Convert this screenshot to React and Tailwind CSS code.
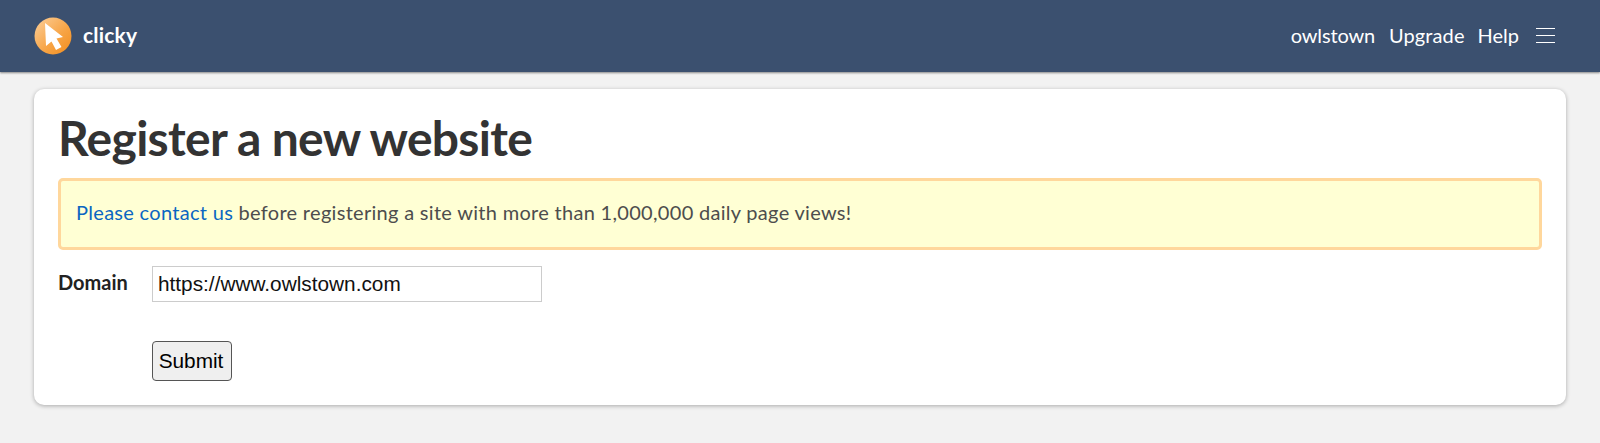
const textFont = "font-['Lato','Open_Sans',sans-serif]";

function Logo() {
  return (
    <svg width="38" height="38" viewBox="0 0 38 38">
      <defs>
        <linearGradient id="logoFill" x1="0.1" y1="0.1" x2="0.9" y2="0.9">
          <stop offset="0" stopColor="#fbc88c" />
          <stop offset="0.6" stopColor="#f7a445" />
          <stop offset="1" stopColor="#f39226" />
        </linearGradient>
      </defs>
      <circle cx="19" cy="19" r="18.5" fill="url(#logoFill)" />
      <path d="M11 6 L29 20 L22.5 21.5 L27.5 30 L22 33 L17.5 24.5 L12 29 Z" fill="#fff" />
    </svg>
  );
}

export default function App() {
  return (
    <div className={`h-[443px] bg-[#f2f2f2] overflow-hidden ${textFont}`}>
      {/* Header */}
      <header className="h-[72px] bg-[#3b506f] shadow-[0_1px_2px_rgba(0,0,0,0.45)] pl-[34px] pr-[45px] flex items-center justify-between">
        <div className="flex items-center gap-[11px]">
          <Logo />
          <span className="text-white font-bold text-[21px] tracking-[0.2px] -mt-[3px]">clicky</span>
        </div>
        <nav className="flex items-center text-white text-[20px] -mt-[2px]">
          <span className="tracking-[-0.15px]">owlstown</span>
          <span className="ml-[14px] tracking-[0.1px]">Upgrade</span>
          <span className="ml-[13px]">Help</span>
          <div className="ml-[17px] w-[19px] flex flex-col gap-[6px]">
            <div className="h-px bg-white" />
            <div className="h-px bg-white" />
            <div className="h-px bg-white" />
          </div>
        </nav>
      </header>

      {/* Card */}
      <main className="mt-[17px] mx-[34px] h-[316px] bg-white rounded-[10px] shadow-[0_1px_4px_rgba(0,0,0,0.3)] px-6 pt-[18px]">
        <h1 className="text-[#333] font-bold text-[48px] tracking-[-0.7px] leading-[60px] pt-px -mb-px">Register a new website</h1>
        <div className="mt-[11px] h-[72px] bg-[#ffffd4] border-[3px] border-[#ffd79c] rounded-[5px] px-[15px] flex items-center text-[#4d4d4d] text-[20px] tracking-[0.3px]">
          <p className="-mt-[4px]">
            <a className="text-[#0a66c2]">Please contact us</a> before registering a site with more than 1,000,000 daily page views!
          </p>
        </div>
        <form className="mt-4">
          <div className="flex items-start">
            <label className="w-[94px] pt-px text-[#222] font-bold text-[20px]">Domain</label>
            <input
              readOnly
              value="https://www.owlstown.com"
              className="w-[390px] h-[36px] border border-[#ccc] px-[5px] text-[20.8px] text-[#111] font-['Liberation_Sans',sans-serif] outline-none"
            />
          </div>
          <button
            type="button"
            className="mt-[39px] ml-[94px] w-[80px] h-[40px] bg-[#efefef] border border-[#555] rounded-[4px] pr-[2px] text-[20.8px] text-black font-['Liberation_Sans',sans-serif]"
          >
            Submit
          </button>
        </form>
      </main>
    </div>
  );
}
